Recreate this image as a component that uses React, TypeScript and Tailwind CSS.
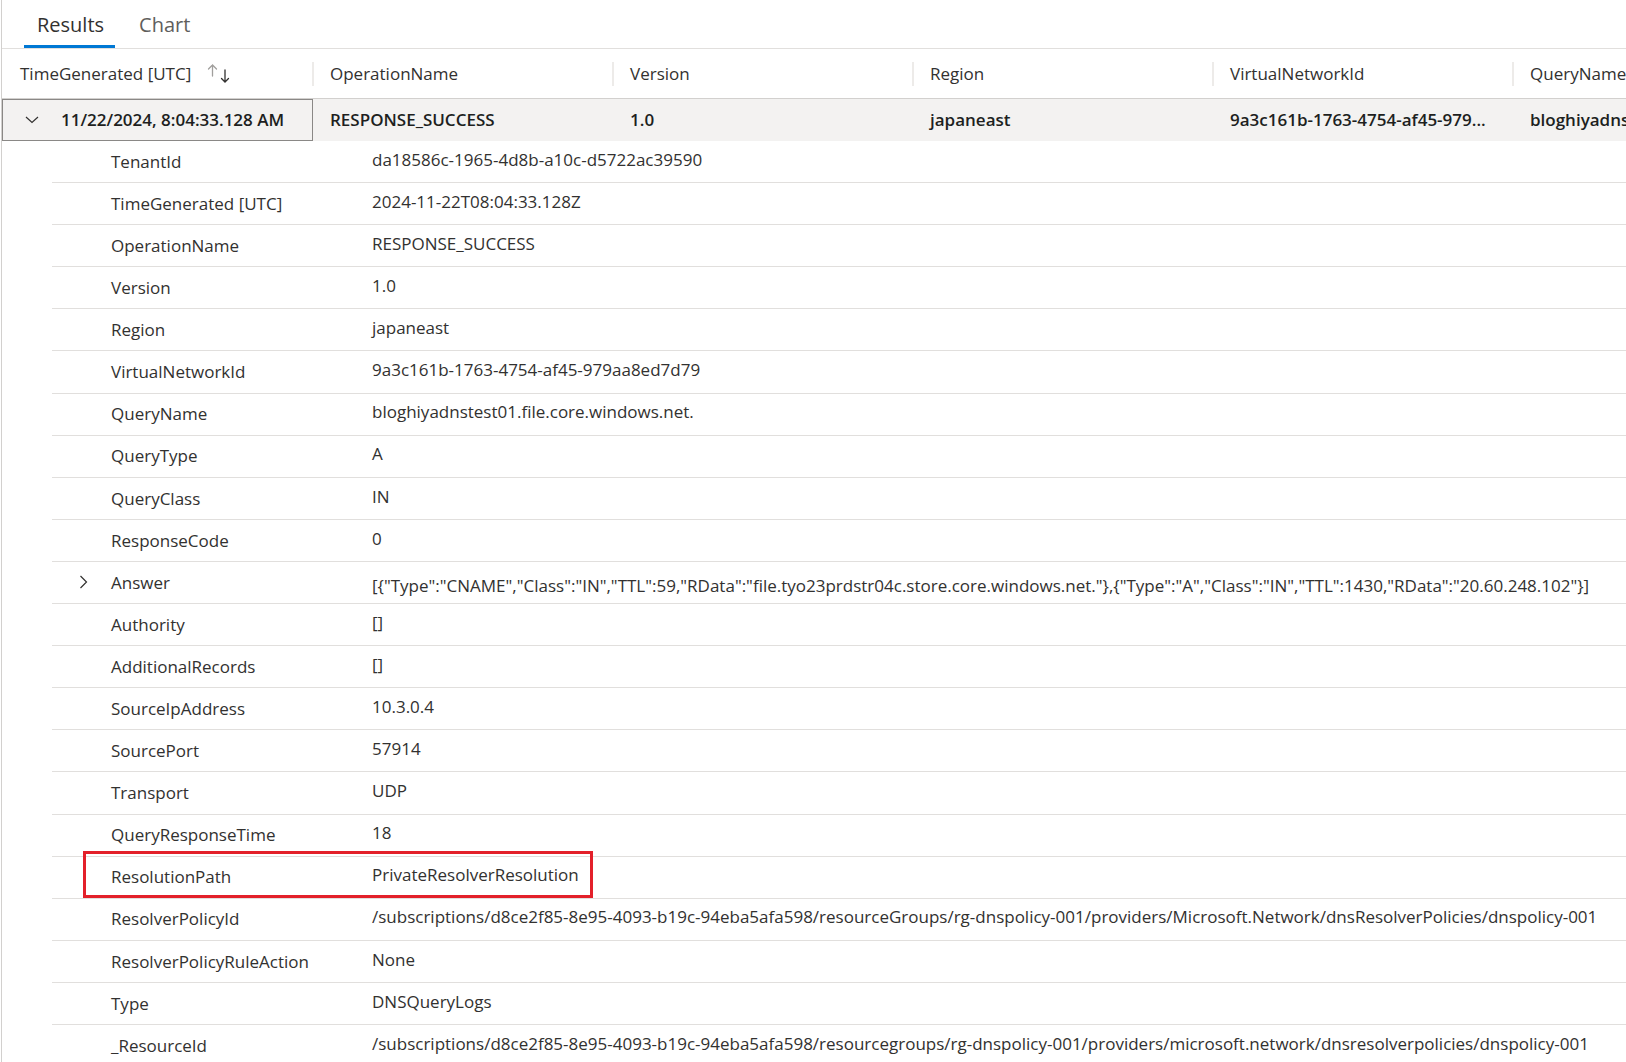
import React from 'react';

const font = { fontFamily: '"Open Sans", "Noto Sans", sans-serif' };

const columns = ['OperationName', 'Version', 'Region', 'VirtualNetworkId', 'QueryName'];
const summary = ['RESPONSE_SUCCESS', '1.0', 'japaneast', '9a3c161b-1763-4754-af45-979...', 'bloghiyadnstest01.file.core.windows.net.'];

const details: { key: string; value: string; expandable?: boolean; highlight?: boolean }[] = [
  { key: 'TenantId', value: 'da18586c-1965-4d8b-a10c-d5722ac39590' },
  { key: 'TimeGenerated [UTC]', value: '2024-11-22T08:04:33.128Z' },
  { key: 'OperationName', value: 'RESPONSE_SUCCESS' },
  { key: 'Version', value: '1.0' },
  { key: 'Region', value: 'japaneast' },
  { key: 'VirtualNetworkId', value: '9a3c161b-1763-4754-af45-979aa8ed7d79' },
  { key: 'QueryName', value: 'bloghiyadnstest01.file.core.windows.net.' },
  { key: 'QueryType', value: 'A' },
  { key: 'QueryClass', value: 'IN' },
  { key: 'ResponseCode', value: '0' },
  {
    key: 'Answer',
    value:
      '[{"Type":"CNAME","Class":"IN","TTL":59,"RData":"file.tyo23prdstr04c.store.core.windows.net."},{"Type":"A","Class":"IN","TTL":1430,"RData":"20.60.248.102"}]',
    expandable: true,
  },
  { key: 'Authority', value: '[]' },
  { key: 'AdditionalRecords', value: '[]' },
  { key: 'SourceIpAddress', value: '10.3.0.4' },
  { key: 'SourcePort', value: '57914' },
  { key: 'Transport', value: 'UDP' },
  { key: 'QueryResponseTime', value: '18' },
  { key: 'ResolutionPath', value: 'PrivateResolverResolution', highlight: true },
  {
    key: 'ResolverPolicyId',
    value:
      '/subscriptions/d8ce2f85-8e95-4093-b19c-94eba5afa598/resourceGroups/rg-dnspolicy-001/providers/Microsoft.Network/dnsResolverPolicies/dnspolicy-001',
  },
  { key: 'ResolverPolicyRuleAction', value: 'None' },
  { key: 'Type', value: 'DNSQueryLogs' },
  {
    key: '_ResourceId',
    value:
      '/subscriptions/d8ce2f85-8e95-4093-b19c-94eba5afa598/resourcegroups/rg-dnspolicy-001/providers/microsoft.network/dnsresolverpolicies/dnspolicy-001',
  },
];

function SortIcon() {
  return (
    <svg width="24" height="22" viewBox="0 0 24 22" fill="none" strokeWidth="1.3" strokeLinecap="round">
      <path d="M5.5 12V1M1.5 5L5.5 1L9.5 5" stroke="#a19f9d" />
      <path d="M18 6V18M14.5 14.5L18 18L21.5 14.5" stroke="#323130" />
    </svg>
  );
}

function ChevronDown() {
  return (
    <svg width="14" height="8" viewBox="0 0 14 8" fill="none">
      <path d="M1 1L7 6.5L13 1" stroke="#323130" strokeWidth="1.2" />
    </svg>
  );
}

function ChevronRight() {
  return (
    <svg width="9" height="14" viewBox="0 0 9 14" fill="none">
      <path d="M1.5 1L7.5 7L1.5 13" stroke="#323130" strokeWidth="1.2" />
    </svg>
  );
}

export default function App() {
  return (
    <div style={font} className="h-[1062px] w-full overflow-hidden bg-white text-[#323130]">
      <div className="ml-[1px] h-full border-l border-[#d2d0ce]">
        {/* tabs */}
        <div className="flex h-[49px] items-stretch border-b border-[#e1dfdd] pl-[22px]">
          <div className="flex flex-col justify-between px-[13px] pt-[10px]">
            <span className="text-[20px] font-medium text-[#323130]">Results</span>
            <span className="-mx-[13px] h-[3px] w-[91px] bg-[#0078d4]" />
          </div>
          <div className="flex pl-[22px] pt-[10px]">
            <span className="text-[20px] text-[#605e5c]">Chart</span>
          </div>
        </div>

        {/* column headers */}
        <div className="flex h-[49px] items-center whitespace-nowrap text-[17px]">
          <div className="flex w-[310px] shrink-0 items-center pl-[18px]">
            <span>TimeGenerated [UTC]</span>
            <span className="ml-[16px] mt-[2px]">
              <SortIcon />
            </span>
          </div>
          {columns.map((c) => (
            <div key={c} className="flex w-[300px] shrink-0 items-center">
              <span className="h-[24px] w-[2px] bg-[#edebe9]" />
              <span className="pl-[16px]">{c}</span>
            </div>
          ))}
        </div>

        {/* expanded summary row */}
        <div className="flex h-[43px] items-stretch whitespace-nowrap border-t border-[#d2d0ce] bg-[#f3f2f1] text-[17px] font-semibold text-[#201f1e]">
          <div className="flex w-[311px] shrink-0 items-center border border-[#8a8886] pl-[22px]">
            <ChevronDown />
            <span className="pl-[22px]">11/22/2024, 8:04:33.128 AM</span>
          </div>
          {summary.map((s, i) => (
            <div key={i} className="flex w-[300px] shrink-0 items-center overflow-hidden pl-[17px]">
              {s}
            </div>
          ))}
        </div>

        {/* detail rows */}
        <div className="ml-[50px] text-[17px]">
          {details.map((d) => (
            <div key={d.key} className="relative flex h-[42.1px] items-center whitespace-nowrap border-b border-[#e1dfdd]">
              <div className="flex w-[320px] shrink-0 items-center">
                <span className="flex w-[59px] justify-center pl-[4px]">{d.expandable && <ChevronRight />}</span>
                <span>{d.key}</span>
              </div>
              <div className={d.expandable ? 'pt-[6px]' : 'pb-[4px]'}>{d.value}</div>
              {d.highlight && (
                <div className="pointer-events-none absolute left-[31px] top-[-6px] h-[47px] w-[510px] border-[3px] border-[#e3202a]" />
              )}
            </div>
          ))}
        </div>
      </div>
    </div>
  );
}
